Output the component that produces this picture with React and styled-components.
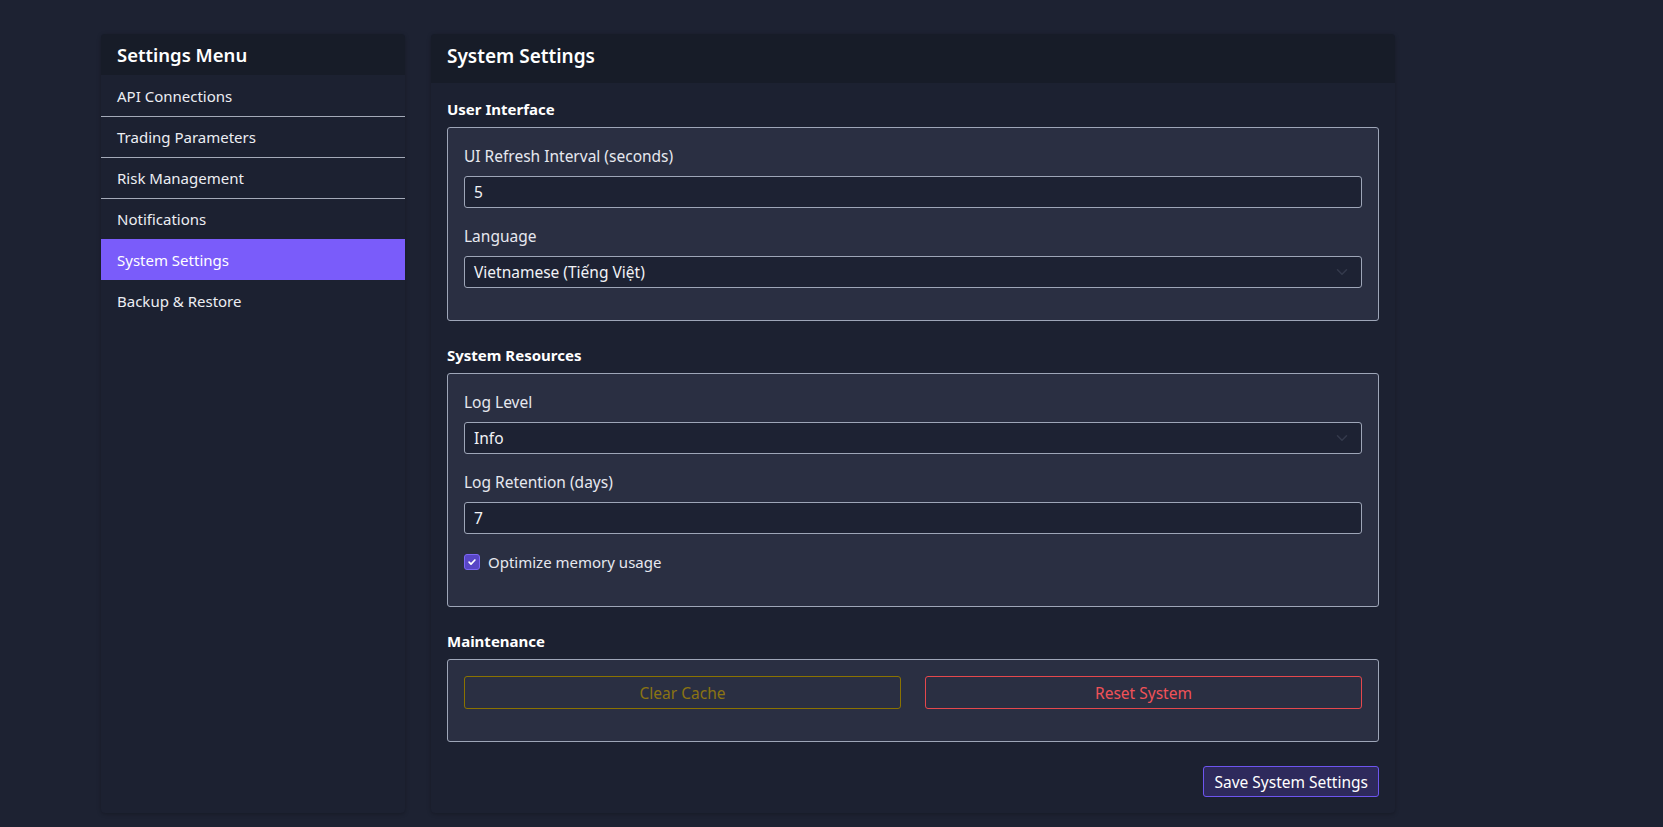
import React from 'react';
import styled, { createGlobalStyle } from 'styled-components';

const Global = createGlobalStyle`
  html, body {
    margin: 0;
    padding: 0;
    background: #1d2232;
    font-family: "Noto Sans", "Open Sans", sans-serif;
    color: #e6e8ef;
  }
  * { box-sizing: border-box; }
`;

const Page = styled.div`
  display: flex;
  align-items: stretch;
  gap: 26px;
  padding: 34px 0 14px 101px;
  min-height: 827px;
`;

const Sidebar = styled.aside`
  width: 304px;
  flex: none;
  background: #1c2131;
  border-radius: 4px;
  box-shadow: 0 1px 4px rgba(0, 0, 0, 0.25);
  overflow: hidden;
`;

const SideHeader = styled.div`
  background: #171c28;
  padding: 8px 16px 7px;
  font-size: 18.5px;
  font-weight: 600;
  line-height: 26px;
  color: #ffffff;
`;

const MenuItem = styled.div`
  padding: 8px 16px;
  line-height: 24px;
  font-size: 15px;
  color: ${p => (p.$active ? '#ffffff' : '#eceef3')};
  background: ${p => (p.$active ? '#7a5cfa' : 'transparent')};
  border-top: 1px solid ${p => (p.$line ? '#a4aab8' : p.$active ? '#7a5cfa' : 'transparent')};
  &:first-of-type {
    border-top: 0;
  }
`;

const Main = styled.section`
  width: 964px;
  flex: none;
  background: #1c2131;
  border-radius: 4px;
  box-shadow: 0 1px 4px rgba(0, 0, 0, 0.25);
  overflow: hidden;
`;

const MainHeader = styled.div`
  background: #171c28;
  padding: 10px 16px 14px;
  font-size: 19px;
  font-weight: 600;
  line-height: 25px;
  color: #ffffff;
`;

const Body = styled.div`
  padding: 16px 16px 16px;
  display: flex;
  flex-direction: column;
`;

const SectionTitle = styled.div`
  font-size: 15px;
  font-weight: 700;
  line-height: 20px;
  color: #ffffff;
  margin: ${p => (p.$first ? '0' : '24px')} 0 8px;
`;

const Fieldset = styled.div`
  background: #2a2f42;
  border: 1px solid #9ea6b8;
  border-radius: 3px;
  padding: 16px 16px 0;
`;

const Group = styled.div`
  margin-bottom: 16px;
  &:last-child {
    margin-bottom: 32px;
  }
`;

const Label = styled.div`
  font-size: 15.5px;
  line-height: 24px;
  color: #e6e8ef;
  margin-bottom: 8px;
`;

const Input = styled.div`
  height: 32px;
  background: #1d2233;
  border: 1px solid #9ea6b8;
  border-radius: 3px;
  padding: 0 9px;
  display: flex;
  align-items: center;
  justify-content: space-between;
  font-size: 15.5px;
  color: #f1f2f6;
`;

const Chevron = styled.svg`
  width: 12px;
  height: 12px;
  margin-right: 4px;
  color: #343a4c;
`;

const CheckRow = styled.label`
  display: flex;
  align-items: center;
  gap: 8px;
  line-height: 24px;
  font-size: 15px;
  color: #e6e8ef;
`;

const CheckBox = styled.span`
  width: 16px;
  height: 16px;
  border-radius: 3px;
  background: #5846c6;
  border: 1px solid #7c66f5;
  display: flex;
  align-items: center;
  justify-content: center;
`;

const ButtonRow = styled.div`
  display: grid;
  grid-template-columns: 1fr 1fr;
  gap: 24px;
  margin-bottom: 32px;
`;

const OutlineButton = styled.button`
  height: 33px;
  background: transparent;
  border: 1px solid ${p => p.$color};
  color: ${p => p.$text};
  border-radius: 3px;
  font-family: inherit;
  font-size: 15.5px;
  cursor: pointer;
`;

const Footer = styled.div`
  display: flex;
  justify-content: flex-end;
  margin-top: 24px;
`;

const SaveButton = styled.button`
  height: 31px;
  padding: 0 10px;
  background: #2e2a5c;
  border: 1px solid #6d55f0;
  border-radius: 3px;
  color: #ffffff;
  font-family: inherit;
  font-size: 15.5px;
  cursor: pointer;
`;

const menu = [
  'API Connections',
  'Trading Parameters',
  'Risk Management',
  'Notifications',
  'System Settings',
  'Backup & Restore',
];
const activeIndex = 4;

function Select({ value }) {
  return (
    <Input>
      <span>{value}</span>
      <Chevron viewBox="0 0 16 16" fill="none">
        <path d="M2 5l6 6 6-6" stroke="currentColor" strokeWidth="2" strokeLinecap="round" strokeLinejoin="round" />
      </Chevron>
    </Input>
  );
}

export default function App() {
  return (
    <>
      <Global />
      <Page>
        <Sidebar>
          <SideHeader>Settings Menu</SideHeader>
          {menu.map((item, i) => (
            <MenuItem
              key={item}
              $active={i === activeIndex}
              $line={i > 0 && i < activeIndex}
            >
              {item}
            </MenuItem>
          ))}
        </Sidebar>

        <Main>
          <MainHeader>System Settings</MainHeader>
          <Body>
            <SectionTitle $first>User Interface</SectionTitle>
            <Fieldset>
              <Group>
                <Label>UI Refresh Interval (seconds)</Label>
                <Input>5</Input>
              </Group>
              <Group>
                <Label>Language</Label>
                <Select value="Vietnamese (Tiếng Việt)" />
              </Group>
            </Fieldset>

            <SectionTitle>System Resources</SectionTitle>
            <Fieldset>
              <Group>
                <Label>Log Level</Label>
                <Select value="Info" />
              </Group>
              <Group>
                <Label>Log Retention (days)</Label>
                <Input>7</Input>
              </Group>
              <Group>
                <CheckRow>
                  <CheckBox>
                    <svg width="10" height="10" viewBox="0 0 12 12" fill="none">
                      <path d="M2.5 6.2l2.3 2.3 4.7-4.9" stroke="#fff" strokeWidth="2" strokeLinecap="round" strokeLinejoin="round" />
                    </svg>
                  </CheckBox>
                  Optimize memory usage
                </CheckRow>
              </Group>
            </Fieldset>

            <SectionTitle>Maintenance</SectionTitle>
            <Fieldset>
              <ButtonRow>
                <OutlineButton $color="#8a7200" $text="#8a7412">Clear Cache</OutlineButton>
                <OutlineButton $color="#e5484d" $text="#f05258">Reset System</OutlineButton>
              </ButtonRow>
            </Fieldset>

            <Footer>
              <SaveButton>Save System Settings</SaveButton>
            </Footer>
          </Body>
        </Main>
      </Page>
    </>
  );
}
